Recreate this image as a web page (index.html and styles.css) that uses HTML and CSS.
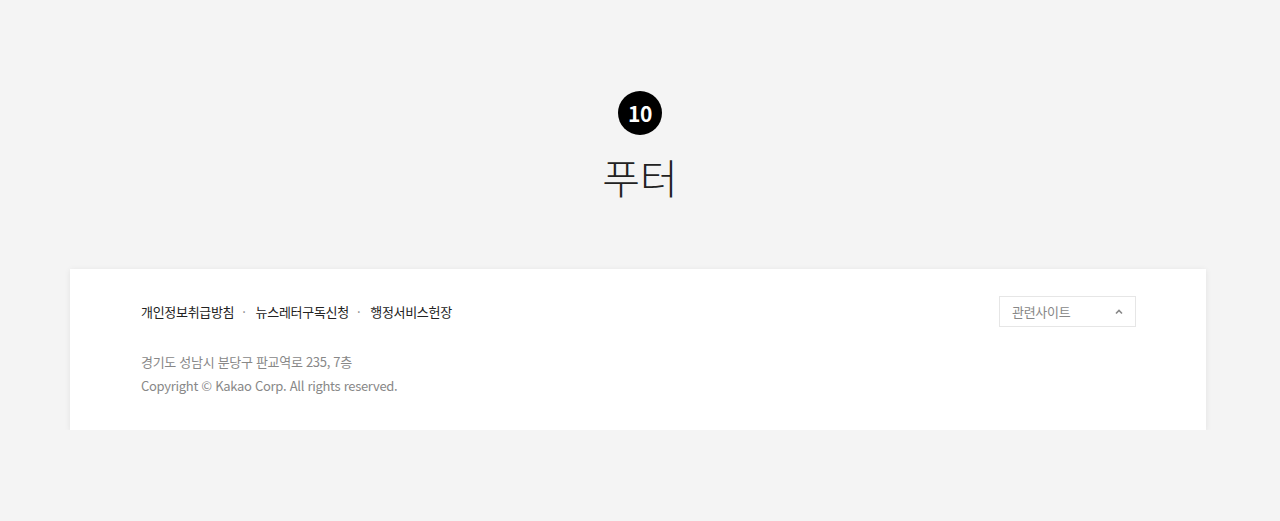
FILE: index.html
```html
<!DOCTYPE html>
<html lang="ko">
<head>
    <meta charset="UTF-8">
    <meta name="viewport" content="width=device-width, initial-scale=1.0">
    <title>푸터</title>
    <link rel="stylesheet" href="styles.css">
</head>
<body>

    <div class="section-head">
        <span class="num">10</span>
        <h2>푸터</h2>
    </div>

    <footer class="footer">
        <div class="footer-top">
            <ul class="footer-links">
                <li><a href="#">개인정보취급방침</a></li>
                <li><a href="#">뉴스레터구독신청</a></li>
                <li><a href="#">행정서비스헌장</a></li>
            </ul>
            <div class="family-site">
                <span>관련사이트</span>
                <svg width="10" height="10" viewBox="0 0 10 10"><path d="M2 6.5 L5 3.5 L8 6.5" fill="none" stroke="#888" stroke-width="1.6"/></svg>
            </div>
        </div>
        <address class="footer-info">
            경기도 성남시 분당구 판교역로 235, 7층<br>
            Copyright © Kakao Corp. All rights reserved.
        </address>
    </footer>

</body>
</html>
```

FILE: styles.css
```css
body {
    margin: 0;
    background-color: #f4f4f4;
    font-family: "Noto Sans CJK KR", "Noto Sans", sans-serif;
    color: #222;
}
.section-head {
    display: flex;
    flex-direction: column;
    align-items: center;
    padding-top: 91px;
}
.num {
    display: flex;
    align-items: center;
    justify-content: center;
    width: 44px;
    height: 44px;
    border-radius: 50%;
    background: #000;
    color: #fff;
    font-size: 21px;
    font-weight: bold;
    letter-spacing: -0.5px;
}
.section-head h2 {
    margin: 19px 0 0;
    font-size: 41px;
    font-weight: 300;
    line-height: 44px;
    color: #222;
}
.footer {
    margin: 71px 74px 0 70px;
    padding: 27px 70px 32px 71px;
    background: #fff;
    box-shadow: 0px 1px 6px rgba(0, 0, 0, 0.08);
}
.footer-top {
    display: flex;
    justify-content: space-between;
    align-items: center;
}
.footer-links {
    display: flex;
    margin: 0;
    padding: 0;
    list-style: none;
    letter-spacing: -0.3px;
}
.footer-links li {
    font-size: 13px;
}
.footer-links li + li::before {
    content: "·";
    margin: 0 10px 0 8px;
    color: #888;
}
.footer-links a {
    color: #222;
    text-decoration: none;
}
.family-site {
    display: flex;
    justify-content: space-between;
    align-items: center;
    box-sizing: border-box;
    width: 137px;
    height: 31px;
    padding: 0 11px 0 12px;
    border: 1px solid #e6e6e6;
    font-size: 13px;
    letter-spacing: -0.3px;
    color: #888;
}
.footer-info {
    margin-top: 23px;
    font-style: normal;
    font-size: 13px;
    line-height: 24px;
    letter-spacing: -0.3px;
    color: #888;
}
```
